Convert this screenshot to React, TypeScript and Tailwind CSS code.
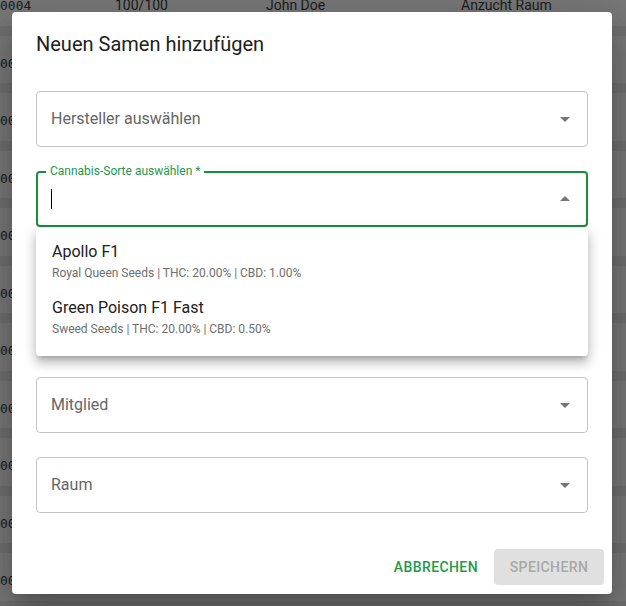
import React from "react"

// Rows of the table that sits behind the modal backdrop
const rows = Array.from({ length: 11 }, (_, i) => i)

const options = [
  { name: "Apollo F1", info: "Royal Queen Seeds | THC: 20.00% | CBD: 1.00%" },
  { name: "Green Poison F1 Fast", info: "Sweed Seeds | THC: 20.00% | CBD: 0.50%" },
]

function ArrowIcon({ up = false }: { up?: boolean }) {
  return (
    <svg viewBox="0 0 24 24" className={`h-6 w-6 fill-[#757575] ${up ? "rotate-180" : ""}`}>
      <path d="M7 10l5 5 5-5z" />
    </svg>
  )
}

function SelectField({ label }: { label: string }) {
  return (
    <div className="flex h-[56px] items-center justify-between rounded-[4px] border border-[#c4c4c4] pl-[14px] pr-[10px]">
      <span className="text-[16px] text-[#666666]">{label}</span>
      <ArrowIcon />
    </div>
  )
}

export default function App() {
  return (
    <div className="relative h-[606px] w-[626px] overflow-hidden bg-[#787878] font-['Roboto',sans-serif]">
      {/* dimmed page behind the dialog */}
      <div className="-mt-[22px] flex flex-col">
        {rows.map((i) => (
          <div key={i} className="flex h-[57.5px] flex-col">
            <div className="flex h-[47.5px] items-center pt-[8px] text-[14px] text-[#1c1c1c]">
              <span className="w-[115px] font-['DejaVu_Sans_Mono',monospace] text-[13px]">0004</span>
              <span className="w-[151px]">100/100</span>
              <span className="w-[195px]">John Doe</span>
              <span>Anzucht Raum</span>
            </div>
            <div className="h-[10px] bg-[#6f6f6f]" />
          </div>
        ))}
      </div>

      {/* modal dialog */}
      <div className="absolute inset-0 flex items-center pl-[12px]">
        <div className="flex w-[600px] flex-col rounded-[4px] bg-white shadow-[0_11px_15px_-7px_rgba(0,0,0,0.2),0_24px_38px_3px_rgba(0,0,0,0.14),0_9px_46px_8px_rgba(0,0,0,0.12)]">
          <h2 className="px-[24px] pt-[16px] text-[20px] font-normal leading-8 text-[#212121]">
            Neuen Samen hinzufügen
          </h2>

          <div className="flex flex-col px-[24px] pb-[28px] pt-[31px]">
            <SelectField label="Hersteller auswählen" />

            {/* focused autocomplete with open popup */}
            <div className="relative mt-[24px]">
              <div className="flex h-[56px] items-center justify-between rounded-[4px] border-2 border-[#14903f] pl-[13px] pr-[9px]">
                <span className="h-[20px] w-px bg-black" />
                <ArrowIcon up />
              </div>
              <span className="absolute -top-[8px] left-[10px] bg-white px-[4px] text-[12px] leading-4 text-[#21994d]">
                Cannabis-Sorte auswählen *
              </span>
              <div className="absolute left-0 right-0 top-[57px] z-10 rounded-[4px] bg-white py-[8px] shadow-[0_5px_5px_-3px_rgba(0,0,0,0.2),0_8px_10px_1px_rgba(0,0,0,0.14),0_3px_14px_2px_rgba(0,0,0,0.12)]">
                {options.map((o) => (
                  <div key={o.name} className="flex h-[56px] flex-col px-[16px] pt-[4px]">
                    <span className="text-[16px] leading-6 text-[#212121]">{o.name}</span>
                    <span className="text-[12px] leading-[18px] text-[#6e6e6e]">{o.info}</span>
                  </div>
                ))}
              </div>
            </div>

            <div className="mt-[150px]">
              <SelectField label="Mitglied" />
            </div>
            <div className="mt-[24px]">
              <SelectField label="Raum" />
            </div>
          </div>

          <div className="flex items-center justify-end gap-[8px] px-[8px] pb-[9px] pt-[8px]">
            <button className="h-[36px] rounded-[4px] px-[8px] text-[14px] font-medium uppercase tracking-[0.4px] text-[#1f9a4c]">
              Abbrechen
            </button>
            <button
              disabled
              className="h-[36px] w-[110px] rounded-[4px] bg-[#e0e0e0] text-[14px] font-medium uppercase tracking-[0.4px] text-[#a8a8a8]"
            >
              Speichern
            </button>
          </div>
        </div>
      </div>
    </div>
  )
}
